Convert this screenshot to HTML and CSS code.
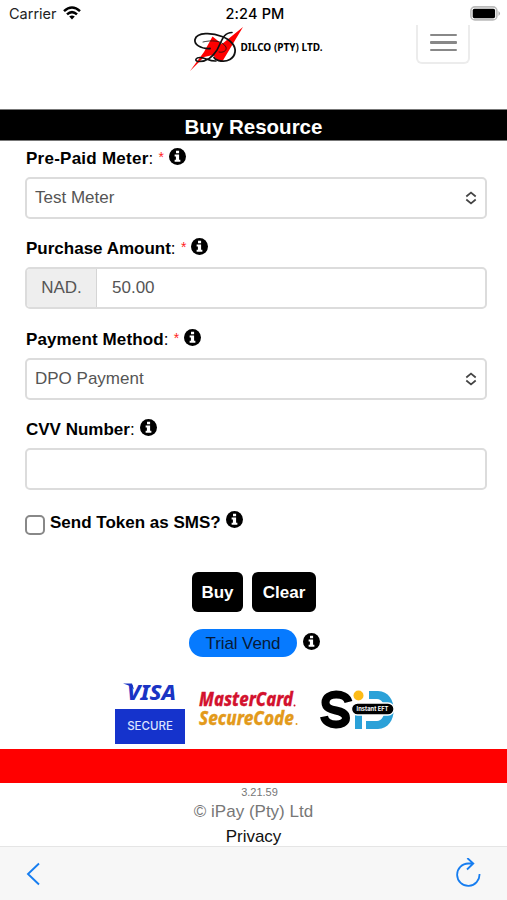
FILE: index.html
```html
<!DOCTYPE html>
<html lang="en">
<head>
<meta charset="utf-8">
<title>Buy Resource</title>
<link rel="stylesheet" href="styles.css">
</head>
<body>
<svg class="defs" width="0" height="0" aria-hidden="true">
  <symbol id="info" viewBox="0 0 16 16"><circle cx="8" cy="8" r="8"/><path fill="#fff" d="M6.600 2.500h2.900v2.500H6.600zM5.300 6.200h4.200v4.800h1.200v1.900H5.300V11h1.200V8.100H5.300z"/></symbol>
  <symbol id="updown" viewBox="0 0 12 14"><path d="M1.300 5.500 6 1.500l4.700 4M1.300 8.500 6 12.500l4.700-4" fill="none" stroke="#444" stroke-width="1.700"/></symbol>
</svg>
<div class="status">
  <div class="carrier"><span>Carrier</span>
    <svg width="18" height="14" viewBox="0 0 18 14" fill="none" stroke="#000" stroke-width="2.500"><path d="M1 5.200Q9-2.200 17 5.200M4 8.400Q9 3.800 14 8.400"/><path d="M9 13.500 6.200 10.600Q9 8.200 11.800 10.600z" fill="#000" stroke="none"/></svg>
  </div>
  <div class="time">2:24 PM</div>
  <svg class="battery" width="31" height="15" viewBox="0 0 31 15"><rect x=".9" y=".9" width="26" height="13" rx="4" fill="#fff" stroke="#bbb" stroke-width="1.600"/><rect x="2.700" y="2.700" width="22.400" height="9.600" rx="1.700"/><path d="M28.500 5q3 2.500 0 5z" fill="#aaa"/></svg>
</div>
<header class="header">
  <svg class="logo" width="150" height="60" viewBox="0 0 150 60">
    <path d="M10 51 24 32 32.500 16.500 42 24 63 7 42 42 37 40 33 35 24 37z" fill="#f00"/>
    <g fill="none" stroke="#111" stroke-linecap="round">
      <path d="M30 28.500C20 29 14 24 15 19.500 17 12 32 12.500 42 16.500 51 20 56 26 55 32 54 39 47 42 41 41 37 40.500 35 39 34 37.500" stroke-width="1.800"/>
      <path d="M52 12.500C43 12.500 42 21 37 30 32 38 25 42 18 41.500c-4-1-2-4 2-4 6 0 9 4 16 3.500" stroke-width="1.600"/>
      <path d="M23 22c8-2 19-2 23 5 1 4-3 6-7 5" stroke-width=".8"/>
    </g>
    <text x="60.500" y="30.800" textLength="82" lengthAdjust="spacingAndGlyphs" font-size="9.700" class="logo-text">DILCO (PTY) LTD.</text>
  </svg>
  <div class="menu"><i></i><i></i><i></i></div>
</header>
<h1 class="title">Buy Resource</h1>
<main class="form">
  <div class="group">
    <div class="label"><b class="meter">Pre-Paid Meter</b>: <em>*</em><svg class="info"><use href="#info"/></svg></div>
    <div class="control select"><span>Test Meter</span><svg width="12" height="14"><use href="#updown"/></svg></div>
  </div>
  <div class="group">
    <div class="label"><b>Purchase Amount</b>: <em>*</em><svg class="info"><use href="#info"/></svg></div>
    <div class="control amount"><span class="prefix">NAD.</span><span class="value">50.00</span></div>
  </div>
  <div class="group">
    <div class="label"><b class="method">Payment Method</b>: <em>*</em><svg class="info"><use href="#info"/></svg></div>
    <div class="control select"><span>DPO Payment</span><svg width="12" height="14"><use href="#updown"/></svg></div>
  </div>
  <div class="group">
    <div class="label"><b>CVV Number</b>:<svg class="info"><use href="#info"/></svg></div>
    <div class="control"></div>
  </div>
  <div class="check"><span class="box"></span><b>Send Token as SMS?</b><svg class="info"><use href="#info"/></svg></div>
</main>
<div class="actions"><span class="btn buy">Buy</span><span class="btn clear">Clear</span></div>
<div class="trial"><span class="pill">Trial Vend</span><svg class="info"><use href="#info"/></svg></div>
<div class="brands">
  <div class="visa">
    <svg width="70" height="29" viewBox="0 0 70 29"><text x="12" y="19.500" textLength="49" lengthAdjust="spacingAndGlyphs" font-size="22" class="visa-text">VISA</text><path d="M8 3.500h9l2 6q-3-4-11-6z" fill="#1a34c4"/></svg>
    <div class="secure">SECURE</div>
  </div>
  <svg class="mc" width="104" height="50" viewBox="0 0 104 50"><text x="3" y="23" textLength="94" lengthAdjust="spacingAndGlyphs" font-size="19" fill="#d3122e" stroke="#d3122e" stroke-width=".3">MasterCard</text><text x="3" y="41.500" textLength="95" lengthAdjust="spacingAndGlyphs" font-size="19" fill="#e39a1b" stroke="#e39a1b" stroke-width=".3">SecureCode</text><circle cx="98.500" cy="22.500" r="1" fill="#d3122e"/><circle cx="100.500" cy="41" r="1" fill="#e39a1b"/></svg>
  <svg class="sid" width="80" height="46" viewBox="0 0 80 46">
    <path d="M28.500 13C26 3 5.500 3 5.500 13.500c0 11 20.500 5 20.500 15.500 0 9-20 9-22-1.500" fill="none" stroke="#000" stroke-width="8"/>
    <circle cx="38.500" cy="6.500" r="5" fill="#fdbb16"/>
    <path d="M35 14h7v26h-7zM49 2h9c21 0 21 38 0 38H46v-8h11c10 0 10-22 0-22h-8z" fill="#2ba1d8"/>
    <rect x="31.500" y="14" width="42.500" height="12" rx="6" stroke="#fff" stroke-width="1.300"/>
    <text x="36.500" y="22" textLength="32" lengthAdjust="spacingAndGlyphs" font-size="5.500" class="eft">Instant EFT</text>
  </svg>
</div>
<div class="band"></div>
<footer class="footer"><div class="version">3.21.59</div><div class="copy">© iPay (Pty) Ltd</div><div class="privacy">Privacy</div></footer>
<nav class="toolbar">
  <svg width="16" height="24" viewBox="0 0 16 24"><path d="M14 1.500 3 12l11 10.500" fill="none" stroke="#167df0" stroke-width="1.900"/></svg>
  <svg width="28" height="32" viewBox="0 0 28 32" fill="none" stroke="#167df0" stroke-width="1.800"><path d="M25.500 16A11.200 11.200 0 1 1 14.300 5.500H19M13.300 0l6 5.500-6.300 6"/></svg>
</nav>
</body>
</html>
```
FILE: styles.css
```css
* { box-sizing: border-box; }
body { margin: 0; width: 507px; height: 900px; overflow: hidden; display: flex; flex-direction: column; background: #fff; color: #000; font: 17px/20px "Liberation Sans", Arial, sans-serif; }
body > * { flex-shrink: 0; }
svg { display: block; flex: none; }
svg text { white-space: nowrap; }
.defs { position: absolute; }
.status { height: 25px; padding: 2px 6px 0 9px; display: grid; grid-template-columns: 1fr auto 1fr; align-items: center; font: 14.5px/23px Inter, sans-serif; }
.carrier { display: flex; align-items: center; gap: 6px; color: #222; }
.carrier svg { margin-top: -1px; }
.time { font-weight: 500; letter-spacing: .15px; }
.battery { justify-self: end; }
.header { height: 84px; display: flex; justify-content: space-between; padding: 0 37px 0 180px; }
.logo { margin-top: -5px; overflow: visible; }
.logo-text { font-family: "Noto Sans", sans-serif; font-weight: 700; }
.menu { width: 54px; height: 39px; border: 2px solid #ececec; border-top: 0; border-radius: 0 0 6px 6px; padding-top: 9px; display: flex; flex-direction: column; align-items: center; gap: 5px; }
.menu i { width: 27px; height: 2.4px; background: #888; border-radius: 1px; }
.title { margin: 0; height: 32px; border-top: 1px solid #777; border-bottom: 1px solid #777; background: #000; color: #fff; text-align: center; font-size: 20.5px; line-height: 33px; }
.form { padding: 1px 20px 0 25px; height: 403px; }
.group { height: 90.4px; }
.label { height: 35px; padding: 7px 0 0 1px; display: flex; white-space: pre; line-height: 20px; }
.meter { letter-spacing: .25px; }
.method { letter-spacing: .12px; }
.label em { color: #f22; font-style: normal; font-size: 14px; line-height: 17px; margin-left: .6px; }
.info { width: 17px; height: 17px; margin-left: 5px; margin-top: -1px; }
.control { height: 42px; border: 2px solid #dcdcdc; border-radius: 5px; color: #555; display: flex; align-items: center; font-size: 17px; overflow: hidden; }
.select { justify-content: space-between; padding: 0 8px; }
.prefix { width: 70px; align-self: stretch; display: flex; align-items: center; justify-content: center; background: #eee; border-right: 1px solid #d5d5d5; }
.value { margin-left: 15px; }
.check { display: flex; padding-top: 8px; line-height: 22px; }
.check b { margin: 0 0 0 5px; }
.check .info { margin-left: 5px; margin-top: -1px; }
.box { width: 20px; height: 20px; margin-top: 3px; border: 2px solid #888; border-radius: 5px; }
.actions { margin-top: 28px; padding-left: 192px; display: flex; gap: 9px; }
.btn { height: 40px; border-radius: 6px; background: #000; color: #fff; font-weight: 700; line-height: 41px; text-align: center; }
.buy { width: 51px; }
.clear { width: 64px; }
.trial { margin-top: 17px; padding-left: 189px; display: flex; height: 28px; }
.pill { width: 108px; border-radius: 15px; background: #067aff; color: #061a38; text-align: center; line-height: 29px; letter-spacing: -.1px; }
.trial .info { margin: 4px 0 0 6px; }
.brands { height: 92px; display: flex; padding-left: 115px; }
.visa { margin-top: 23px; width: 70px; }
.visa-text { font-family: "Noto Sans", sans-serif; font-style: italic; font-weight: 800; fill: #1a34c4; }
.secure { height: 35px; background: #1533cc; color: #dce3ff; font: 500 11.5px/35px Inter, sans-serif; text-align: center; }
.mc { margin: 26px 0 0 11px; font-family: "Noto Sans", sans-serif; font-style: italic; font-weight: 800; }
.sid { margin: 32px 0 0 20px; }
.eft { fill: #fff; font-family: Inter, sans-serif; font-weight: 700; }
.band { height: 34px; background: #f00; }
.footer { height: 63px; overflow: hidden; text-align: center; color: #777; }
.version { font-size: 11px; line-height: 18px; padding-left: 12px; }
.copy { line-height: 22px; }
.privacy { color: #111; line-height: 27px; }
.toolbar { height: 54px; background: #f7f7f7; border-top: 1px solid #e5e5e5; padding: 0 25px; display: flex; align-items: center; justify-content: space-between; }
```
